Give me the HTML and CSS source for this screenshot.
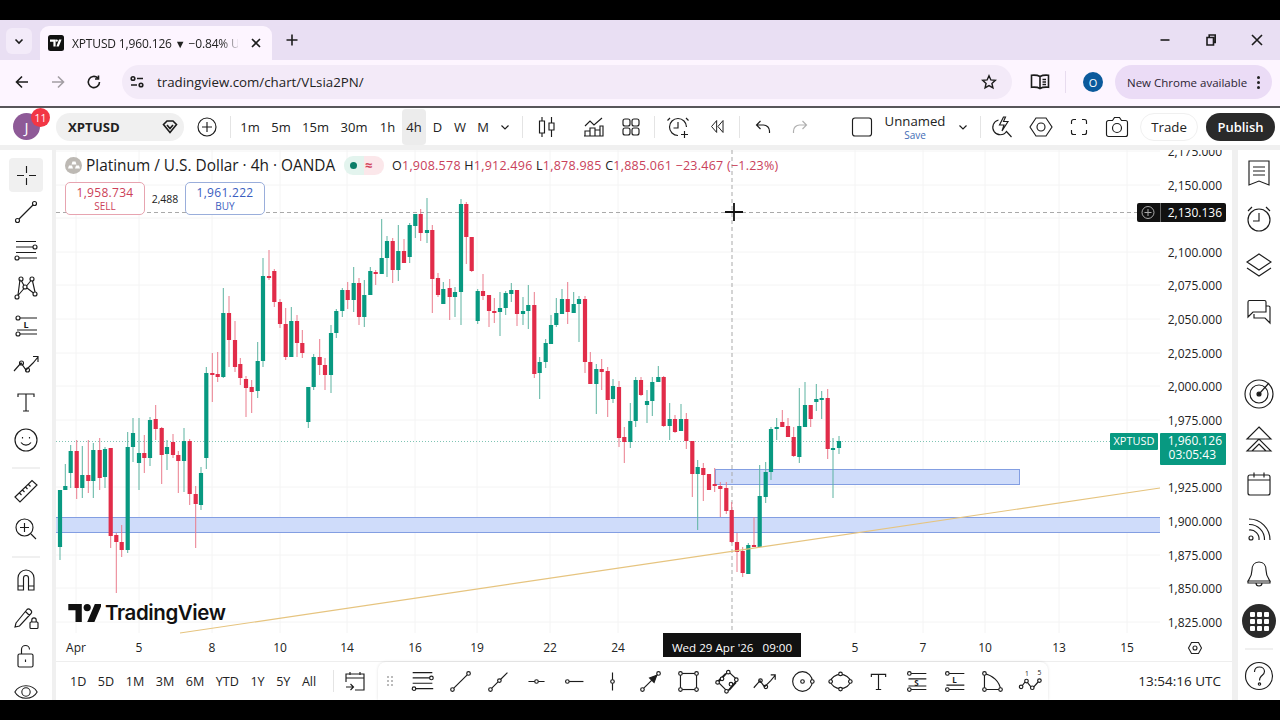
FILE: index.html
```html
<!DOCTYPE html>
<html lang="en">
<head>
<meta charset="utf-8">
<title>XPTUSD</title>
<link rel="stylesheet" href="styles.css">
</head>
<body>
<div class="screen">
  <div class="letterbox"></div>

  <div class="tabstrip">
    <button class="tablist"><svg class="ic" width="14" height="14" viewBox="0 0 14 14"><path class="thick" d="M3.5 5.5 7 9l3.5-3.5"/></svg></button>
    <div class="tab">
      <svg class="favicon" width="16" height="16" viewBox="0 0 16 16"><rect width="16" height="16" rx="2.5" fill="#111"/><path fill="#fff" d="M2 4.5h5.6v7H5.4V6.7H2zM10.8 11.5H8.4l2.6-7h2.6z"/><circle cx="8.6" cy="5.6" r="1.2" fill="#fff"/></svg>
      <span class="tab-title">XPTUSD 1,960.126 <span class="tri">▼</span> −0.84% U</span>
      <svg class="ic tab-x" width="12" height="12" viewBox="0 0 12 12"><path class="thick" d="M2 2l8 8M10 2l-8 8"/></svg>
    </div>
    <svg class="ic newtab" width="14" height="14" viewBox="0 0 14 14"><path class="thick" d="M7 1.5v11M1.5 7h11"/></svg>
    <div class="winctl">
      <svg class="ic" width="12" height="12" viewBox="0 0 12 12"><path class="thick" d="M1.5 6h9"/></svg>
      <svg class="ic" width="12" height="12" viewBox="0 0 12 12"><path class="thick" d="M2 3.5h6.5V11H2zM4.2 3.2V1h6v7.4H8.6"/></svg>
      <svg class="ic" width="12" height="12" viewBox="0 0 12 12"><path class="thick" d="M1 1l10 10M11 1 1 11"/></svg>
    </div>
  </div>

  <div class="addrbar">
    <svg class="ic nav" width="16" height="16" viewBox="0 0 16 16"><path class="thick" d="M14 8H2.5M8 2.5 2.5 8 8 13.5"/></svg>
    <svg class="ic nav dim" width="16" height="16" viewBox="0 0 16 16"><path class="thick" d="M2 8h11.5M8 2.5 13.5 8 8 13.5"/></svg>
    <svg class="ic nav" width="16" height="16" viewBox="0 0 16 16"><path class="thick" d="M13.5 8A5.6 5.6 0 1 1 11.7 3.900M12.500 1.500V5H9"/></svg>
    <div class="omnibox">
      <svg class="ic" width="16" height="16" viewBox="0 0 16 16"><circle class="thick" cx="4" cy="4.500" r="1.800"/><path class="thick" d="M8 4.500h6M2 11h6"/><circle class="thick" cx="12" cy="11" r="1.800"/></svg>
      <span class="url">tradingview.com/chart/VLsia2PN/</span>
      <svg class="ic star" width="16" height="16" viewBox="0 0 18 18"><path class="thick" d="M9 2l2.100 4.700 5 .5-3.800 3.400 1.100 5L9 13l-4.400 2.600 1.100-5L1.900 7.200l5-.5z"/></svg>
    </div>
    <svg class="ic reader" width="20" height="18" viewBox="0 0 20 18"><path class="thick" d="M10 3.500C8 2.400 4.500 2 1.500 2.300v12c3-.3 6.500 0 8.500 1.200 2-1.200 5.500-1.500 8.500-1.200v-12C15.500 2 12 2.400 10 3.500zM10 3.500v12M12.500 6.500h3.500M12.500 9h3.500M12.500 11.500h3.500"/></svg>
    <span class="vsep light"></span>
    <span class="profile">O</span>
    <div class="update"><span>New Chrome available</span><span class="dots"><i></i><i></i><i></i></span></div>
  </div>

  <div class="tvbar">
    <div class="avatar-wrap"><span class="avatar">J</span><span class="badge">11</span></div>
    <div class="symbol"><span>XPTUSD</span>
      <svg class="ic" width="16" height="16" viewBox="0 0 16 16"><path class="thick" d="M5 2h6l3.500 3.500L8 13.500 1.500 5.500zM5 6l3 3.500L11 6"/></svg>
    </div>
    <div class="ib w46"><svg class="ic" width="22" height="22" viewBox="0 0 22 22"><circle cx="11" cy="11" r="9"/><path d="M11 6v10M6 11h10"/></svg></div>
    <span class="vsep"></span>
    <div class="tfs">
      <span class="tf w32">1m</span><span class="tf w30">5m</span><span class="tf w39">15m</span><span class="tf w38">30m</span><span class="tf w29">1h</span><span class="tf w24 on">4h</span><span class="tf w23">D</span><span class="tf w22">W</span><span class="tf w24">M</span>
      <div class="ib w20"><svg class="ic" width="12" height="12" viewBox="0 0 12 12"><path d="M2.500 4.500 6 8l3.500-3.500"/></svg></div>
    </div>
    <span class="vsep ml7"></span>
    <div class="ib w47"><svg class="ic" width="22" height="24" viewBox="0 0 22 24"><path d="M6 2v4M6 18v4M3.500 6h5v12h-5zM15.500 2v6M15.500 15v7M13 8h5v7h-5z"/></svg></div>
    <div class="ib w48"><svg class="ic" width="24" height="24" viewBox="0 0 24 24"><path d="M3 11l5-5 4 4 8-7M3 21v-5h5v5M8 21v-8h5v8M13 21v-6h5v6M18 21v-10h3v10H2"/></svg></div>
    <div class="ib w26"><svg class="ic" width="22" height="22" viewBox="0 0 22 22"><rect x="3" y="3" width="7" height="7" rx="2"/><rect x="12" y="3" width="7" height="7" rx="2"/><rect x="3" y="12" width="7" height="7" rx="2"/><rect x="12" y="12" width="7" height="7" rx="2"/></svg></div>
    <span class="vsep ml10"></span>
    <div class="ib w46"><svg class="ic" width="24" height="24" viewBox="0 0 24 24"><path d="M12 20.500a8.500 8.500 0 1 1 8.500-8.500M12 7v6H7.500M4 3 1.500 5.500M20 3l2.500 2.500M18.500 16v7M15 19.500h7"/></svg></div>
    <div class="ib w32"><svg class="ic" width="17" height="17" viewBox="0 0 20 20"><path d="M9 3 3 10l6 7zM16.500 3l-6 7 6 7z"/></svg></div>
    <span class="vsep ml6"></span>
    <div class="ib w45"><svg class="ic" width="18" height="18" viewBox="0 0 18 18"><path d="M6.500 3 2.500 7l4 4M2.500 7h7a6 6 0 0 1 6 6v2"/></svg></div>
    <div class="ib w30"><svg class="ic dimmer" width="18" height="18" viewBox="0 0 18 18"><path d="M11.500 3l4 4-4 4M15.500 7h-7a6 6 0 0 0-6 6v2"/></svg></div>
    <div class="ib w40 ml27"><svg class="ic" width="22" height="22" viewBox="0 0 22 22"><rect x="1.500" y="2" width="19" height="18" rx="2.500"/></svg></div>
    <div class="layout w66"><span class="layout-name">Unnamed</span><span class="layout-save">Save</span></div>
    <div class="ib w20 ml5"><svg class="ic" width="12" height="12" viewBox="0 0 12 12"><path d="M2.500 4.500 6 8l3.500-3.500"/></svg></div>
    <span class="vsep ml7"></span>
    <div class="ib w42"><svg class="ic" width="24" height="24" viewBox="0 0 24 24"><path d="M8.500 5a7.500 7.500 0 1 0 8 11.500M16 16l5.500 6M13.500 2l-4 8h4.500l-2 6 6-9.500h-4.500l2-4.500z"/></svg></div>
    <div class="ib w36"><svg class="ic" width="24" height="24" viewBox="0 0 24 24"><path d="M7 3h10l6 9-6 9H7l-6-9z"/><circle cx="12" cy="12" r="4"/></svg></div>
    <div class="ib w40"><svg class="ic" width="20" height="20" viewBox="0 0 20 20"><path d="M2.500 7V4.500a2 2 0 0 1 2-2H7M13 2.500h2.500a2 2 0 0 1 2 2V7M17.500 13v2.500a2 2 0 0 1-2 2H13M7 17.500H4.500a2 2 0 0 1-2-2V13"/></svg></div>
    <div class="ib w35"><svg class="ic" width="24" height="22" viewBox="0 0 24 22"><path d="M3.500 4.500h4l2-3h5l2 3h4a2 2 0 0 1 2 2v12a2 2 0 0 1-2 2h-17a2 2 0 0 1-2-2v-12a2 2 0 0 1 2-2z"/><circle cx="12" cy="12" r="4.500"/></svg></div>
    <span class="trade">Trade</span>
    <span class="publish">Publish</span>
  </div>

  <div class="tvmain">
    <aside class="lefttools">
      <div class="lt on"><svg class="ic" width="28" height="28" viewBox="0 0 28 28"><path d="M14.500 5v7M14.500 17v7M5 14.500h7M17 14.500h7"/></svg></div>
      <div class="lt"><svg class="ic" width="28" height="28" viewBox="0 0 28 28"><circle cx="5.500" cy="22.500" r="2"/><circle cx="22.500" cy="5.500" r="2"/><path d="M7 21 21 7"/></svg></div>
      <div class="lt"><svg class="ic" width="28" height="28" viewBox="0 0 28 28"><path d="M4 5.500h20M4 11h17M4 16.500h20M7 22h18"/><circle cx="23" cy="11" r="2"/><circle cx="5" cy="22" r="2"/></svg></div>
      <div class="lt"><svg class="ic" width="28" height="28" viewBox="0 0 28 28"><circle cx="9" cy="5" r="2"/><circle cx="20" cy="5" r="2"/><circle cx="13" cy="13" r="2"/><circle cx="5" cy="23" r="2"/><circle cx="23" cy="20" r="2"/><path d="M9.500 7 12 11.500M19 6.500 14.500 12M8 5.500 6 21M20.500 7l2.500 11M15 14l6.500 5M12 14.500 6 21.500"/></svg></div>
      <div class="lt"><svg class="ic" width="28" height="28" viewBox="0 0 28 28"><circle cx="6" cy="6" r="2"/><circle cx="6" cy="22" r="2"/><path d="M8 6h17M8 22h17M5 18h20"/><text class="mini" x="14" y="15.500">L</text></svg></div>
      <div class="lt"><svg class="ic" width="28" height="28" viewBox="0 0 28 28"><path d="M2 21 9 13l5 7 7-7 5-6M21 6.500h5V12"/><circle cx="9.500" cy="13" r="2"/><circle cx="15.500" cy="20" r="2"/></svg></div>
      <div class="lt"><svg class="ic" width="28" height="28" viewBox="0 0 28 28"><path d="M6 9V6h16v3M14 6v17M11 23h6"/></svg></div>
      <div class="lt"><svg class="ic" width="28" height="28" viewBox="0 0 28 28"><circle cx="14" cy="14" r="11"/><path d="M9 16.500c2.500 3.500 7.500 3.500 10 0M10.500 11v1.500M17.500 11v1.500"/></svg></div>
      <hr class="hsep">
      <div class="lt"><svg class="ic" width="28" height="28" viewBox="0 0 28 28"><path d="M3 20 20 3.500l5 4.500L8 25zM7.500 16l2 2M10.500 13l2 2M13.500 10l2 2M16.500 7.500l2 2"/></svg></div>
      <div class="lt"><svg class="ic" width="28" height="28" viewBox="0 0 28 28"><circle cx="12.500" cy="12.500" r="8.500"/><path d="M12.500 8v9M8 12.500h9M19 19l5 5"/></svg></div>
      <hr class="hsep">
      <div class="lt"><svg class="ic" width="28" height="28" viewBox="0 0 28 28"><path d="M6 24V12a8 8 0 0 1 16 0v12h-5.500V12a2.500 2.500 0 0 0-5 0v12zM6 20h5.500M16.500 20H22"/></svg></div>
      <div class="lt"><svg class="ic" width="28" height="28" viewBox="0 0 28 28"><path d="M4 19 15 5.500a2 2 0 0 1 3 0l1 1a2 2 0 0 1 0 3L7.500 22 3 23zM13.500 7.500l4 4"/><rect x="18" y="18" width="8" height="6.500" rx="1"/><path d="M19.800 18v-2a2.200 2.200 0 0 1 4.400 0v2"/></svg></div>
      <div class="lt"><svg class="ic" width="28" height="28" viewBox="0 0 28 28"><rect x="6" y="12" width="15" height="13" rx="1.500"/><path d="M9.500 12V7.500a4 4 0 0 1 8 0M13.500 17.500v2.500"/></svg></div>
      <div class="lt eye"><svg class="ic" width="26" height="26" viewBox="0 0 28 28"><path d="M2 14c5-9 19-9 24 0-5 9-19 9-24 0z"/><circle cx="14" cy="14" r="4.500"/></svg></div>
    </aside>

    <div class="center">
      <div class="chart">
        <svg class="plot" width="1176" height="512" viewBox="56 150 1176 512">
          <path class="grid" d="M56 151H1160M56 185H1160M56 218H1160M56 252H1160M56 285H1160M56 319H1160M56 353H1160M56 386H1160M56 420H1160M56 487H1160M56 521H1160M56 555H1160M56 588H1160M56 622H1160M76 150V633M139 150V633M212 150V633M280 150V633M347 150V633M415 150V633M477 150V633M550 150V633M618 150V633M855 150V633M923 150V633M985 150V633M1059 150V633M1127 150V633"/>
          <rect class="zone" x="56" y="517" width="1104" height="16"/>
          <path class="zone-edge" d="M56 517.500H1160M56 532.500H1160"/>
          <rect class="zone zone-edge" x="715.500" y="469.500" width="304" height="15"/>
          <path class="cross" d="M56 212.500H1137M732 150V632"/>
          <path class="last" d="M56 441.500H1110"/>
          <path class="wick-g" d="M60 490V560M65.300 464V490M70.700 445V488M82.300 446V498M93.300 443V498M105 447V488M127.700 432V553M133 418V462M139 418V490M150 417V466M167 440V470M184 428V492M201 467V510M206.300 367V469M223.300 288V378M257.700 342V398M263 258V367M291.300 307V357M308.300 387V428M313.700 354V390M331 325V393M336.300 309V338M342.300 288V317M353.700 267V312M364.300 280V327M370.300 267V295M381.700 219V274M387 236V277M398.300 225V281M409.700 223V263M415.300 214V238M427 198V243M443.300 282V304M455 287V317M461 199V325M477.700 289V324M500 292V336M505.700 291V315M511.300 283V302M523 297V325M528.300 285V329M539.700 357V399M545.700 339V368M551 315V344M556.300 298V327M562 289V314M573.700 292V313M579 296V342M596.300 364V414M613 379V403M630.300 403V448M635.700 377V427M647 390V423M652.300 377V416M658.300 366V382M669.700 403V440M681 404V431M697.700 460V530M748.300 543V574M759.700 465V547M765.700 462V503M771 427V480M776.700 418V440M799.300 388V463M805 382V427M816.300 384V411M821.700 391V419M833 438V498M839 436V454"/>
          <path class="wick-r" d="M76.700 440V499M88.300 440V493M99.700 438V490M110.700 448V548M116.300 533V593M121.700 525V557M144.300 435V473M155.700 405V440M161.700 427V484M173 434V458M178.300 451V493M189.700 439V505M195.700 486V548M212.300 353V402M217.700 352V382M229 296V367M235 321V372M240.300 358V385M246 376V417M251.700 380V413M269 250V280M274.300 269V307M280 299V328M285.700 308V360M297 315V357M302.300 330V358M319.700 339V375M325 358V390M347.700 282V309M359 278V325M375.700 270V285M392.700 238V283M404 239V263M420.700 209V241M432.300 225V313M438 273V297M449.700 279V320M466.300 202V264M471.700 237V272M483 274V300M489 295V327M494.300 298V323M517 290V326M534.300 292V378M567.700 282V324M585 296V373M590.300 352V384M601.700 359V390M607.700 367V417M619 381V447M624.300 427V463M641 377V396M663.700 376V427M675 415V433M686.300 413V449M692.300 441V497M703.300 463V501M709 474V490M714.700 468V492M720.300 482V517M726.300 482V514M731.700 502V543M737 533V572M742.700 547V577M754 517V547M782.300 410V427M788 418V437M793.700 427V457M810.700 405V427M827.700 389V459"/>
          <path class="body-g" d="M60 490V547M65.300 486V490M70.700 451V473M82.300 475V488M93.300 450V481M105 449V477M127.700 447V550M133 433V447M139 453V463M150 420V458M167 447V454M184 441V461M201 473V505M206.300 373V458M223.300 313V377M257.700 361V391M263 276V361M291.300 321V357M308.300 387V422M313.700 357V387M331 333V375M336.300 311V333M342.300 290V311M353.700 283V300M364.300 295V317M370.300 271V295M381.700 258V274M387 241V258M398.300 251V270M409.700 225V257M415.300 214V226M427 230V233M443.300 289V304M455 292V297M461 204V292M477.700 291V321M500 308V312M505.700 293V308M511.300 290V294M523 311V314M528.300 305V311M539.700 362V373M545.700 343V362M551 325V344M556.300 313V325M562 299V314M573.700 304V313M579 299V304M596.300 369V384M613 386V399M630.300 421V442M635.700 380V421M647 401V405M652.300 382V401M658.300 377V382M669.700 419V426M681 419V431M697.700 467V474M748.300 545V574M759.700 496V547M765.700 472V497M771 429V472M776.700 427V429M799.300 426V457M805 405V427M816.300 399V402M821.700 398V400M833 448V450M839 441V448"/>
          <path class="body-r" d="M76.700 451V488M88.300 475V481M99.700 450V478M110.700 448V536M116.300 535V542M121.700 542V550M144.300 453V458M155.700 419V429M161.700 428V455M173 442V455M178.300 455V461M189.700 441V494M195.700 494V504M212.300 373V375M217.700 374V377M229 313V340M235 340V367M240.300 364V378M246 379V388M251.700 387V392M269 276V278M274.300 271V302M280 302V324M285.700 324V357M297 321V343M302.300 343V353M319.700 357V365M325 365V375M347.700 290V300M359 283V317M375.700 272V274M392.700 241V270M404 251V263M420.700 214V233M432.300 230V279M438 278V295M449.700 288V297M466.300 204V237M471.700 237V271M483 291V296M489 295V311M494.300 311V313M517 290V314M534.300 305V374M567.700 299V312M585 299V362M590.300 362V384M601.700 369V372M607.700 371V400M619 387V438M624.300 437V442M641 380V395M663.700 377V426M675 419V432M686.300 419V441M692.300 441V474M703.300 468V475M709 474V490M714.700 484V486M720.300 486V489M726.300 488V511M731.700 510V542M737 542V552M742.700 551V573M754 545V547M782.300 422V427M788 426V437M793.700 437V456M810.700 405V419M827.700 398V449"/>
          <path class="trend" d="M180 633 1160 488"/>
          <path class="cursor" d="M734 203V221M725 212H743"/>
          <g class="axis">
            <text x="1222" y="156">2,175.000</text><text x="1222" y="190">2,150.000</text><text x="1222" y="257">2,100.000</text><text x="1222" y="290">2,075.000</text><text x="1222" y="324">2,050.000</text><text x="1222" y="358">2,025.000</text><text x="1222" y="391">2,000.000</text><text x="1222" y="425">1,975.000</text><text x="1222" y="492">1,925.000</text><text x="1222" y="526">1,900.000</text><text x="1222" y="560">1,875.000</text><text x="1222" y="593">1,850.000</text><text x="1222" y="627">1,825.000</text>
          </g>
          <rect class="tag-dark" x="1137" y="203" width="89" height="19" rx="2"/>
          <path class="tag-div" d="M1160.500 203V222"/>
          <circle class="tag-ico" cx="1148" cy="212.500" r="6"/>
          <path class="tag-ico" d="M1148 209V216M1144.500 212.500H1151.500"/>
          <text class="tag-text end" x="1222" y="217">2,130.136</text>
          <rect class="tag-green" x="1110" y="433" width="48" height="17" rx="1"/>
          <text class="tag-text small mid" x="1134" y="445">XPTUSD</text>
          <rect class="tag-green" x="1160" y="433" width="66" height="32" rx="1"/>
          <text class="tag-text end" x="1222" y="445">1,960.126</text>
          <text class="tag-text end" x="1216" y="459">03:05:43</text>
          <path class="axis-line" d="M56 661.500H1232"/>
          <g class="axis mid">
            <text x="76" y="652">Apr</text><text x="139" y="652">5</text><text x="212" y="652">8</text><text x="280" y="652">10</text><text x="347" y="652">14</text><text x="415" y="652">16</text><text x="477" y="652">19</text><text x="550" y="652">22</text><text x="618" y="652">24</text><text x="855" y="652">5</text><text x="923" y="652">7</text><text x="985" y="652">10</text><text x="1059" y="652">13</text><text x="1127" y="652">15</text>
          </g>
          <rect class="tag-dark" x="663" y="633" width="138" height="24"/>
          <text class="tag-text mid plain" x="732" y="652">Wed 29 Apr '26   09:00</text>
          <path class="ic-path" d="M1188.500 648l3-5.500h7l3 5.500-3 5.500h-7z"/>
          <circle class="ic-path" cx="1195" cy="648" r="2"/>
        </svg>

        <div class="legend">
          <span class="legend-ico"><svg width="16" height="16" viewBox="0 0 16 16"><path fill="#fff" d="M2 11.500h5l-1-3H3zM9 11.500h5l-1-3h-3zM5.500 7.500h5l-1-3h-3z"/></svg></span>
          <span class="legend-title">Platinum / U.S. Dollar · 4h · OANDA</span>
          <span class="status"><i class="dot"></i><span class="wave">≈</span></span>
          <span class="ohlc"><b>O</b>1,908.578 <b>H</b>1,912.496 <b>L</b>1,878.985 <b>C</b>1,885.061 −23.467 (−1.23%)</span>
        </div>
        <div class="orders">
          <div class="order sell"><span class="o-price">1,958.734</span><span class="o-side">SELL</span></div>
          <span class="spread">2,488</span>
          <div class="order buy"><span class="o-price">1,961.222</span><span class="o-side">BUY</span></div>
        </div>
        <div class="wordmark">
          <svg width="33" height="18" viewBox="0 0 36 20"><path fill="#111" d="M15 20H8V7H0V0h15zM29 20h-8L29.500 0H37.500z"/><circle cx="21" cy="4" r="4" fill="#111"/></svg>
          <span>TradingView</span>
        </div>
      </div>

      <div class="bottombar">
        <div class="ranges"><span>1D</span><span>5D</span><span>1M</span><span>3M</span><span>6M</span><span>YTD</span><span>1Y</span><span>5Y</span><span>All</span></div>
        <span class="vsep"></span>
        <div class="ib w42"><svg class="ic" width="22" height="24" viewBox="0 0 22 24"><path d="M2 13V5h18v16h-9M2 9h18M6 3v3M16 3v3M2 18h7M6.500 15 9.500 18l-3 3"/></svg></div>
        <div class="favbar">
          <span class="grip"></span>
          <div class="fb"><svg class="ic" viewBox="0 0 28 28"><path d="M3 4h22M3 10h19M3 16h22M6 22h20"/><circle cx="24" cy="10" r="2"/><circle cx="4.500" cy="22" r="2"/></svg></div>
          <div class="fb"><svg class="ic" viewBox="0 0 28 28"><circle cx="5" cy="23" r="2"/><circle cx="23" cy="5" r="2"/><path d="M6.500 21.500 21.500 6.500"/></svg></div>
          <div class="fb"><svg class="ic" viewBox="0 0 28 28"><circle cx="5" cy="23" r="2"/><circle cx="15" cy="13" r="2"/><path d="M6.500 21.500 13.500 14.500M16.500 11.500 24 4"/></svg></div>
          <div class="fb"><svg class="ic" viewBox="0 0 28 28"><circle cx="14" cy="14" r="2"/><path d="M5 14h7M16 14h7"/></svg></div>
          <div class="fb"><svg class="ic" viewBox="0 0 28 28"><circle cx="6" cy="14" r="2"/><path d="M8 14h16"/></svg></div>
          <div class="fb"><svg class="ic" viewBox="0 0 28 28"><circle cx="14" cy="14" r="2"/><path d="M14 4v8M14 16v8"/></svg></div>
          <div class="fb"><svg class="ic" viewBox="0 0 28 28"><circle cx="5" cy="23" r="2"/><circle cx="23" cy="5" r="2"/><path d="M6.500 21.500 21.500 6.500"/><path class="solid" d="M21 7l-8 3 5 5z"/></svg></div>
          <div class="fb"><svg class="ic" viewBox="0 0 28 28"><rect x="5" y="5" width="18" height="18"/><circle cx="5" cy="5" r="2" class="white"/><circle cx="23" cy="5" r="2" class="white"/><circle cx="5" cy="23" r="2" class="white"/><circle cx="23" cy="23" r="2" class="white"/></svg></div>
          <div class="fb"><svg class="ic" viewBox="0 0 28 28"><path d="M5 15 16 3l10 9-11 13zM4 14l9-9M17 24l8-9"/><circle cx="16" cy="3.500" r="2" class="white"/><circle cx="25" cy="12" r="2" class="white"/><circle cx="19" cy="17" r="2" class="white"/><circle cx="9" cy="11" r="2" class="white"/><circle cx="4" cy="15" r="2" class="white"/><circle cx="14" cy="25" r="2" class="white"/></svg></div>
          <div class="fb"><svg class="ic" viewBox="0 0 28 28"><path d="M2 21 9 13l5 7 7-7 5-6M21 6.500h5V12"/><circle cx="9.500" cy="13" r="2"/><circle cx="15.500" cy="20" r="2"/></svg></div>
          <div class="fb"><svg class="ic" viewBox="0 0 28 28"><circle cx="14" cy="14" r="11"/><circle cx="14" cy="14" r="2"/><circle cx="25" cy="14" r="2" class="white"/></svg></div>
          <div class="fb"><svg class="ic" viewBox="0 0 28 28"><path d="M3 14C3 10 9 6 14 6s11 4 11 8-6 8-11 8-11-4-11-8z"/><circle cx="3" cy="14" r="2" class="white"/><circle cx="14" cy="5.500" r="2" class="white"/><circle cx="25" cy="14" r="2" class="white"/><circle cx="14" cy="22.500" r="2" class="white"/></svg></div>
          <div class="fb"><svg class="ic" viewBox="0 0 28 28"><path d="M6 9V6h16v3M14 6v17M11 23h6"/></svg></div>
          <div class="fb"><svg class="ic" viewBox="0 0 28 28"><path d="M8 5h17M5 11h20M5 19h20M8 23h17"/><circle cx="6" cy="5" r="2"/><circle cx="6" cy="23" r="2"/><text class="mini" x="14" y="18.500">S</text></svg></div>
          <div class="fb"><svg class="ic" viewBox="0 0 28 28"><path d="M8 5h17M5 18h20M8 23h17"/><circle cx="6" cy="5" r="2"/><circle cx="6" cy="23" r="2"/><text class="mini" x="14" y="15.500">L</text></svg></div>
          <div class="fb"><svg class="ic" viewBox="0 0 28 28"><path d="M5 5v18h18C22 14 14 7 5 5z"/><circle cx="5" cy="5" r="2" class="white"/><circle cx="5" cy="23" r="2" class="white"/><circle cx="23" cy="23" r="2" class="white"/></svg></div>
          <div class="fb"><svg class="ic" viewBox="0 0 28 28"><path d="M3 21 9 13l7 9 7-8"/><circle cx="3.500" cy="20" r="2" class="white"/><circle cx="9.500" cy="13.500" r="2" class="white"/><circle cx="16" cy="21" r="2" class="white"/><circle cx="24" cy="13" r="2" class="white"/><text class="mini small" x="10" y="8">1</text><text class="mini small" x="24" y="7">5</text></svg></div>
        </div>
        <span class="clock">13:54:16 UTC</span>
      </div>
    </div>

    <aside class="righttools">
      <div class="rt"><svg class="ic" width="28" height="30" viewBox="0 0 28 30"><path d="M4 3h20v24l-10-4-10 4zM8 9h12M8 13h12M8 17h12"/></svg></div>
      <div class="rt"><svg class="ic" width="32" height="30" viewBox="0 0 32 30"><circle cx="16" cy="16" r="11"/><path d="M16 9v8h-6M5 7l4-4M27 7l-4-4"/></svg></div>
      <div class="rt"><svg class="ic" width="28" height="28" viewBox="0 0 28 28"><path d="M14 3 26 11 14 19 2 11zM2 17l12 8 12-8"/></svg></div>
      <div class="rt"><svg class="ic" width="28" height="28" viewBox="0 0 28 28"><path d="M3 20V5a1.500 1.500 0 0 1 1.500-1.500h15A1.500 1.500 0 0 1 21 5v10H8zM21 9h2.500A1.500 1.500 0 0 1 25 10.500V26l-5-5H9v-4"/></svg></div>
      <div class="rt low gap-big"><svg class="ic" width="32" height="32" viewBox="0 0 32 32"><circle cx="16" cy="16" r="14"/><circle cx="16" cy="16" r="9"/><circle class="solid" cx="16" cy="16" r="2"/><path d="M16 16 26 5"/></svg></div>
      <div class="rt low"><svg class="ic" width="30" height="28" viewBox="0 0 30 28"><path d="M15 2 27 14H3zM3 26h24L15 14zM8 26l7-7 7 7"/></svg></div>
      <div class="rt low"><svg class="ic" width="28" height="28" viewBox="0 0 28 28"><rect x="3" y="5" width="22" height="20" rx="2"/><path d="M3 10h22M9 2.500v5M19 2.500v5"/></svg></div>
      <div class="rt low"><svg class="ic" width="28" height="28" viewBox="0 0 28 28"><circle cx="6" cy="23" r="2"/><path d="M4 15a9 9 0 0 1 10 10M4 9.500a15 15 0 0 1 15.500 15.500M4 4a21 21 0 0 1 21 21"/></svg></div>
      <div class="rt low"><svg class="ic" width="28" height="30" viewBox="0 0 28 30"><path d="M14 3c-5 0-7 4-7 8 0 6-2 8-4 11h22c-2-3-4-5-4-11 0-4-2-8-7-8zM3 22h22v2H3zM11 24a3 3 0 0 0 6 0"/></svg></div>
      <div class="apps"><span class="appgrid"><i></i><i></i><i></i><i></i><i></i><i></i><i></i><i></i><i></i></span></div>
      <hr class="hsep r">
      <div class="rt"><svg class="ic" width="30" height="30" viewBox="0 0 30 30"><circle cx="15" cy="15" r="13.500"/><path d="M10.500 11c0-3 2-5 5-5s5 2 5 4.500-2 3.500-3.500 5-1.500 2-1.500 4"/><circle cx="15.500" cy="23" r="1.200"/></svg></div>
    </aside>
  </div>

  <div class="letterbox"></div>
</div>
</body>
</html>
```

FILE: styles.css
```css
* { box-sizing: border-box; }
html, body { margin: 0; padding: 0; background: #000; }
body { font-family: "Open Sans", "Liberation Sans", sans-serif; color: #131722; }
.screen { width: 1280px; height: 720px; display: flex; flex-direction: column; overflow: hidden; background: #000; }
.letterbox { height: 20px; flex: none; background: #000; }

.ic { fill: none; stroke: #1c1c1c; stroke-width: 1.15; flex: none; display: block; }
.ic .thick, .thick { stroke-width: 1.6; }
.ic .solid { fill: #1c1c1c; }
.ic .white { fill: #fff; }
.ic .mini { fill: #1c1c1c; stroke: none; font: 700 9px "Open Sans", sans-serif; text-anchor: middle; }
.ic .mini.small { font-size: 7.500px; font-weight: 400; }
.dim { opacity: .4; }
.dimmer { opacity: .35; }

/* browser chrome */
.tabstrip { height: 40px; flex: none; background: #e9dff3; display: flex; align-items: flex-end; position: relative; }
.tablist { width: 26px; height: 26px; margin: 0 8px 6px 6px; border: 0; border-radius: 6px; background: #f3ebf9; display: flex; align-items: center; justify-content: center; padding: 0; }
.tab { width: 232px; height: 34px; background: #fdf5ff; border-radius: 9px 9px 0 0; display: flex; align-items: center; padding-left: 8px; }
.favicon { flex: none; }
.tab-title { width: 166px; margin-left: 8px; font-size: 12px; letter-spacing: -.15px; white-space: nowrap; overflow: hidden; color: #222; -webkit-mask-image: linear-gradient(90deg, #000 90%, rgba(0,0,0,.15)); mask-image: linear-gradient(90deg, #000 90%, rgba(0,0,0,.15)); }
.tri { font-size: 11px; }
.tab-x { margin-left: 12px; }
.newtab { margin: 0 0 13px 13px; }
.winctl { margin-left: auto; margin-bottom: 14px; padding-right: 17px; display: flex; gap: 34px; }

.addrbar { height: 48px; flex: none; background: #fdf5ff; border-bottom: 2px solid #58565a; display: flex; align-items: center; padding: 0 8px 2px 14px; }
.nav { margin-right: 20px; }
.omnibox { width: 890px; height: 34px; background: #f3eaf8; border-radius: 17px; display: flex; align-items: center; padding: 0 15px 0 7px; }
.url { margin-left: 12px; font-size: 13.300px; color: #222; }
.star { margin-left: auto; }
.reader { margin-left: 18px; }
.vsep { width: 1px; height: 22px; background: #e4e4e4; flex: none; }
.vsep.light { margin-left: 15px; background: #e8dcef; }
.profile { width: 20px; height: 20px; margin-left: 17px; border-radius: 50%; background: #0b5a9c; color: #fff; font-size: 11px; display: flex; align-items: center; justify-content: center; flex: none; }
.update { width: 157px; height: 34px; margin-left: 12px; background: #ebdcf6; border-radius: 17px; display: flex; align-items: center; padding: 0 12px; font-size: 11.500px; color: #2b2533; white-space: nowrap; }
.dots { margin-left: auto; display: flex; flex-direction: column; gap: 2px; }
.dots i { width: 3px; height: 3px; border-radius: 50%; background: #222; display: block; }

/* TradingView top bar */
.tvbar { height: 37px; flex: none; background: #fff; display: flex; align-items: center; }
.avatar-wrap { width: 52px; height: 37px; position: relative; flex: none; }
.avatar { position: absolute; left: 13px; top: 5px; width: 27px; height: 27px; border-radius: 50%; background: #8e5a97; color: #fff; font-size: 15px; display: flex; align-items: center; justify-content: center; }
.badge { position: absolute; left: 31px; top: 0; width: 19px; height: 19px; border-radius: 50%; background: #f23645; color: #fff; font-size: 10.500px; display: flex; align-items: center; justify-content: center; }
.symbol { width: 128px; height: 28px; margin-left: 4px; background: #f0f0f0; border-radius: 14px; display: flex; align-items: center; padding: 0 6px 0 12px; flex: none; justify-content: space-between; }
.symbol span { font-size: 13.200px; font-weight: 700; color: #222; }
.ib { height: 37px; display: flex; align-items: center; justify-content: center; flex: none; }
.tfs { display: flex; align-items: center; height: 37px; margin-left: 3px; }
.tf { height: 36px; display: flex; align-items: center; justify-content: center; font-size: 13px; color: #222; flex: none; border-radius: 4px; }
.tf.on { background: #ececec; }
.layout { height: 37px; display: flex; flex-direction: column; align-items: center; justify-content: center; flex: none; padding-top: 1px; }
.layout-name { font-size: 13.200px; line-height: 15px; color: #222; }
.layout-save { font-size: 10px; line-height: 12px; color: #3f6bb5; }
.trade { width: 58px; height: 28px; margin-left: 6px; border: 1px solid #f0f0f0; border-radius: 14px; display: flex; align-items: center; justify-content: center; font-size: 13.300px; color: #222; flex: none; }
.publish { width: 69px; height: 28px; margin-left: 8px; background: #2a2a2a; border-radius: 14px; display: flex; align-items: center; justify-content: center; font-size: 13px; font-weight: 600; color: #fff; flex: none; }

.w20 { width: 20px; } .w22 { width: 22px; } .w23 { width: 23px; } .w24 { width: 24px; } .w26 { width: 26px; }
.w29 { width: 29px; } .w30 { width: 30px; } .w32 { width: 32px; } .w35 { width: 35px; } .w36 { width: 36px; }
.w38 { width: 38px; } .w39 { width: 39px; } .w40 { width: 40px; } .w42 { width: 42px; } .w45 { width: 45px; }
.w46 { width: 46px; } .w47 { width: 47px; } .w48 { width: 48px; } .w66 { width: 66px; }
.ml5 { margin-left: 5px; } .ml6 { margin-left: 6px; } .ml7 { margin-left: 7px; }
.ml10 { margin-left: 10px; } .ml27 { margin-left: 27px; }

/* main area */
.tvmain { height: 555px; flex: none; background: #f0f0f0; padding-top: 5px; display: flex; }
.lefttools { width: 52px; flex: none; background: #fff; display: flex; flex-direction: column; align-items: center; padding-top: 8px; overflow: hidden; }
.lt { width: 34px; height: 34px; margin-bottom: 4px; display: flex; align-items: center; justify-content: center; flex: none; border-radius: 4px; }
.lt.on { background: #f0f0f0; margin-bottom: 3px; }
.lt.eye { margin-top: -2px; }
.hsep { width: 28px; height: 2px; margin: 6px 0 5px; border: 0; background: #f0f0f0; flex: none; }
.center { width: 1176px; margin: 0 6px 0 4px; flex: none; display: flex; flex-direction: column; }
.chart { height: 512px; flex: none; background: #fff; position: relative; overflow: hidden; }
.plot { display: block; }
.plot text { font-family: "Open Sans", sans-serif; }
.grid { stroke: #f4f4f4; stroke-width: 1; fill: none; }
.zone { fill: #cfdcfa; }
.zone-edge { stroke: #839ee2; stroke-width: 1; fill: none; }
rect.zone.zone-edge { fill: #cfdcfa; }
.cross { stroke: #a9a9a9; stroke-width: 1; stroke-dasharray: 4 3; fill: none; }
.last { stroke: #7fc4b4; stroke-width: 1; stroke-dasharray: 1 2; fill: none; }
.wick-g { stroke: #5cb3a1; stroke-width: 1; fill: none; }
.wick-r { stroke: #ea7c8d; stroke-width: 1; fill: none; }
.body-g { stroke: #089981; stroke-width: 4.200; fill: none; }
.body-r { stroke: #e12c49; stroke-width: 4.200; fill: none; }
.trend { stroke: #e6c47f; stroke-width: 1.200; fill: none; }
.cursor { stroke: #111; stroke-width: 1.800; fill: none; }
.axis text { font-size: 12px; fill: #222; text-anchor: end; }
.axis.mid text { text-anchor: middle; }
.axis-line { stroke: #eee; stroke-width: 1; fill: none; }
.tag-dark { fill: #111; }
.tag-green { fill: #089981; }
.tag-div { stroke: #666; fill: none; }
.tag-ico { stroke: #aaa; fill: none; stroke-width: 1; }
.plot .tag-text { font-size: 12px; fill: #fff; font-weight: 500; white-space: pre; }
.plot .tag-text.small { font-size: 11px; font-weight: 400; }
.plot .tag-text.plain { font-size: 11.600px; font-weight: 400; }
.tag-text.end { text-anchor: end; }
.tag-text.mid { text-anchor: middle; }
.ic-path { stroke: #222; stroke-width: 1.100; fill: none; }

.legend { position: absolute; left: 9px; top: 5px; height: 20px; display: flex; align-items: center; white-space: nowrap; }
.legend-ico { width: 17px; height: 17px; border-radius: 50%; background: #bdb9b4; display: flex; align-items: center; justify-content: center; flex: none; }
.legend-title { width: 250px; margin-left: 4px; font-size: 15.400px; color: #1b1b1b; }
.status { width: 40px; height: 19px; margin-left: 8px; border-radius: 9px; background: linear-gradient(90deg, #e3f4ee 50%, #fbe7ea 50%); display: flex; align-items: center; flex: none; padding-left: 6px; }
.dot { width: 7px; height: 7px; background: #0a7e68; border-radius: 50%; flex: none; }
.wave { margin-left: 8px; font-size: 13px; line-height: 1; color: #d1435b; font-weight: 700; }
.ohlc { margin-left: 8px; font-size: 12.500px; letter-spacing: .25px; color: #c9415a; }
.ohlc b { font-weight: 400; color: #222; }

.orders { position: absolute; left: 9px; top: 32px; display: flex; align-items: center; }
.order { width: 80px; height: 33px; border-radius: 5px; display: flex; flex-direction: column; align-items: center; justify-content: center; background: #fff; flex: none; }
.sell { border: 1px solid #e7a4b0; color: #cc3f59; }
.buy { border: 1px solid #9aaedb; color: #3a5dc0; }
.o-price { font-size: 12px; line-height: 15px; letter-spacing: .3px; }
.o-side { font-size: 10px; line-height: 13px; }
.spread { width: 40px; text-align: center; font-size: 10.500px; color: #222; background: #fff; }

.wordmark { position: absolute; left: 12px; top: 450px; display: flex; align-items: center; gap: 4px; }
.wordmark span { font-family: Inter, "Open Sans", sans-serif; font-size: 20.500px; font-weight: 600; letter-spacing: -.4px; color: #111; }

.bottombar { height: 38px; flex: none; background: #fff; display: flex; align-items: center; position: relative; }
.ranges { display: flex; width: 277px; height: 38px; align-items: center; padding-left: 14px; font-size: 12.600px; color: #222; gap: 11.500px; flex: none; }
.favbar { width: 670px; height: 38px; margin-left: 2px; border-radius: 8px 8px 0 0; box-shadow: 0 0 3px rgba(0,0,0,.12); display: flex; align-items: center; padding-left: 5px; background: #fff; flex: none; }
.grip { width: 8px; height: 12px; margin: 0 9px 0 3px; flex: none; background-image: radial-gradient(#bbb 1px, transparent 1.200px); background-size: 4px 4px; }
.fb { width: 38px; height: 38px; display: flex; align-items: center; justify-content: center; flex: none; }
.fb .ic { width: 25px; height: 25px; stroke-width: 1.300; }
.clock { margin-left: auto; margin-right: 11px; font-size: 13.500px; color: #222; }

.righttools { width: 42px; flex: none; background: #fff; display: flex; flex-direction: column; align-items: center; padding-top: 8px; overflow: hidden; }
.rt { height: 30px; margin-bottom: 16px; display: flex; align-items: center; justify-content: center; flex: none; width: 34px; }
.rt.low { margin-bottom: 15px; }
.gap-big { margin-top: 37px; }
.apps { width: 34px; height: 34px; border-radius: 50%; background: #2a2a2a; display: flex; align-items: center; justify-content: center; margin-top: 0; flex: none; }
.appgrid { display: grid; grid-template-columns: repeat(3, 5px); gap: 2px; }
.appgrid i { width: 5px; height: 5px; background: #fff; border-radius: 1px; display: block; }
.hsep.r { margin: 10px 0 11px; }
```
